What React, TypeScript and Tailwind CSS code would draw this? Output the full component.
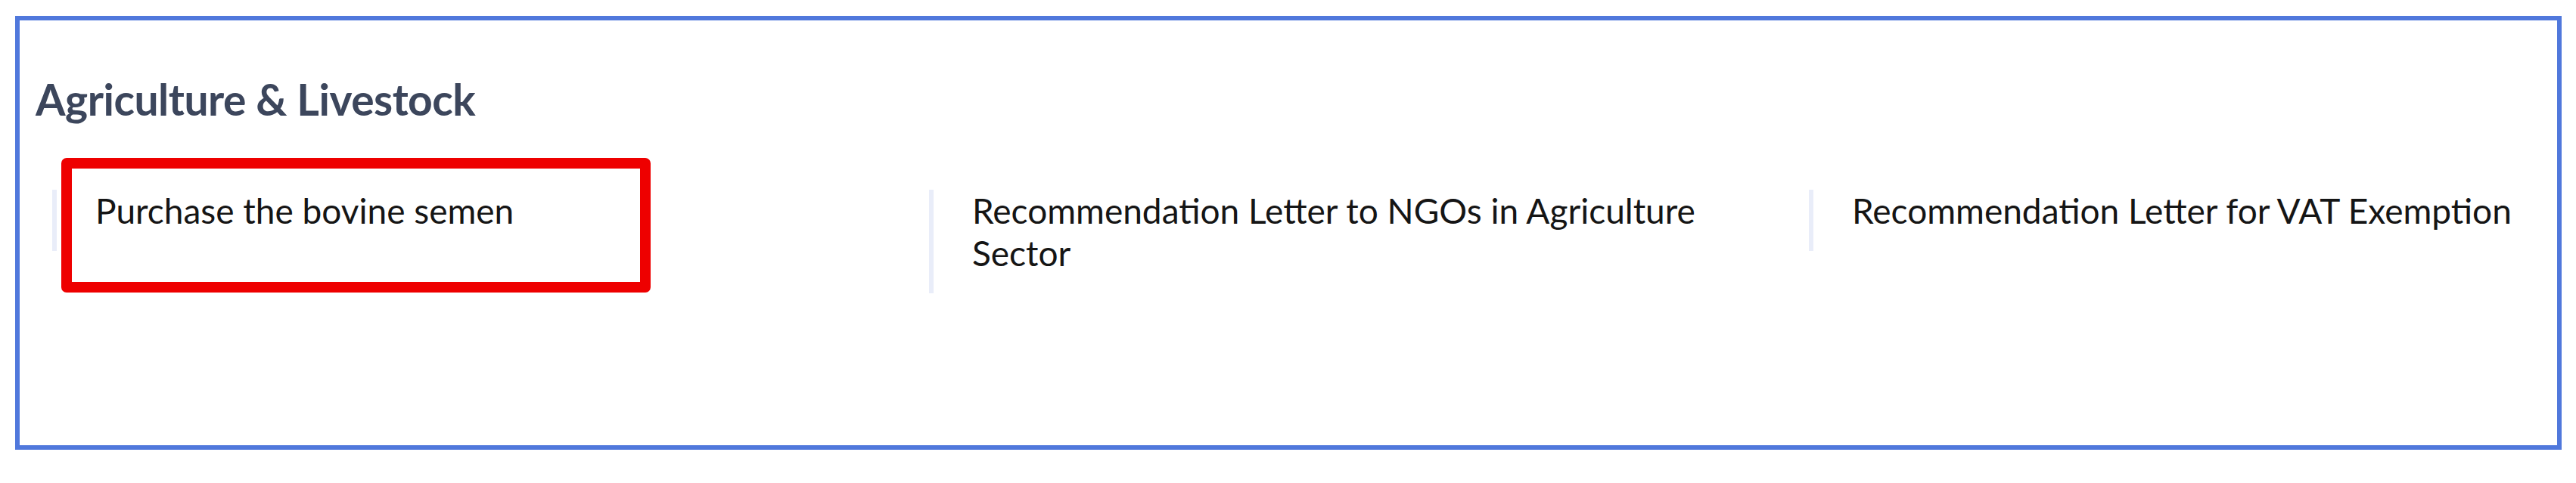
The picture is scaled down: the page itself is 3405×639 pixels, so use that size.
const services = [
  "Purchase the bovine semen",
  "Recommendation Letter to NGOs in Agriculture Sector",
  "Recommendation Letter for VAT Exemption",
];

function ServiceItem({ label, highlighted }: { label: string; highlighted?: boolean }) {
  return (
    <div className="relative border-l-[6px] border-[#e9edf9] pb-[25px] pl-[51px] pr-[30px]">
      <p className="text-[46px] leading-[56px] text-[#151515]">{label}</p>
      {/* annotation frame drawn over the first service */}
      {highlighted && (
        <div className="pointer-events-none absolute left-[6px] top-[-42px] h-[178px] w-[779px] rounded-[7px] border-[14px] border-[#ee0000]" />
      )}
    </div>
  );
}

export default function App() {
  return (
    <div className="min-h-[639px] bg-white pl-[20px] pt-[21px] font-['Lato',sans-serif]">
      <section className="h-[574px] w-[3366px] border-[6px] border-[#5078dc] pl-[21px] pt-[75px]">
        <h2 className="text-[57px] font-bold leading-[58px] tracking-[-0.5px] text-[#3c465c]">
          Agriculture &amp; Livestock
        </h2>
        <div className="ml-[22px] mt-[91px] grid grid-cols-[1159px_1163px_1fr] items-start">
          {services.map((label, i) => (
            <ServiceItem key={label} label={label} highlighted={i === 0} />
          ))}
        </div>
      </section>
    </div>
  );
}
